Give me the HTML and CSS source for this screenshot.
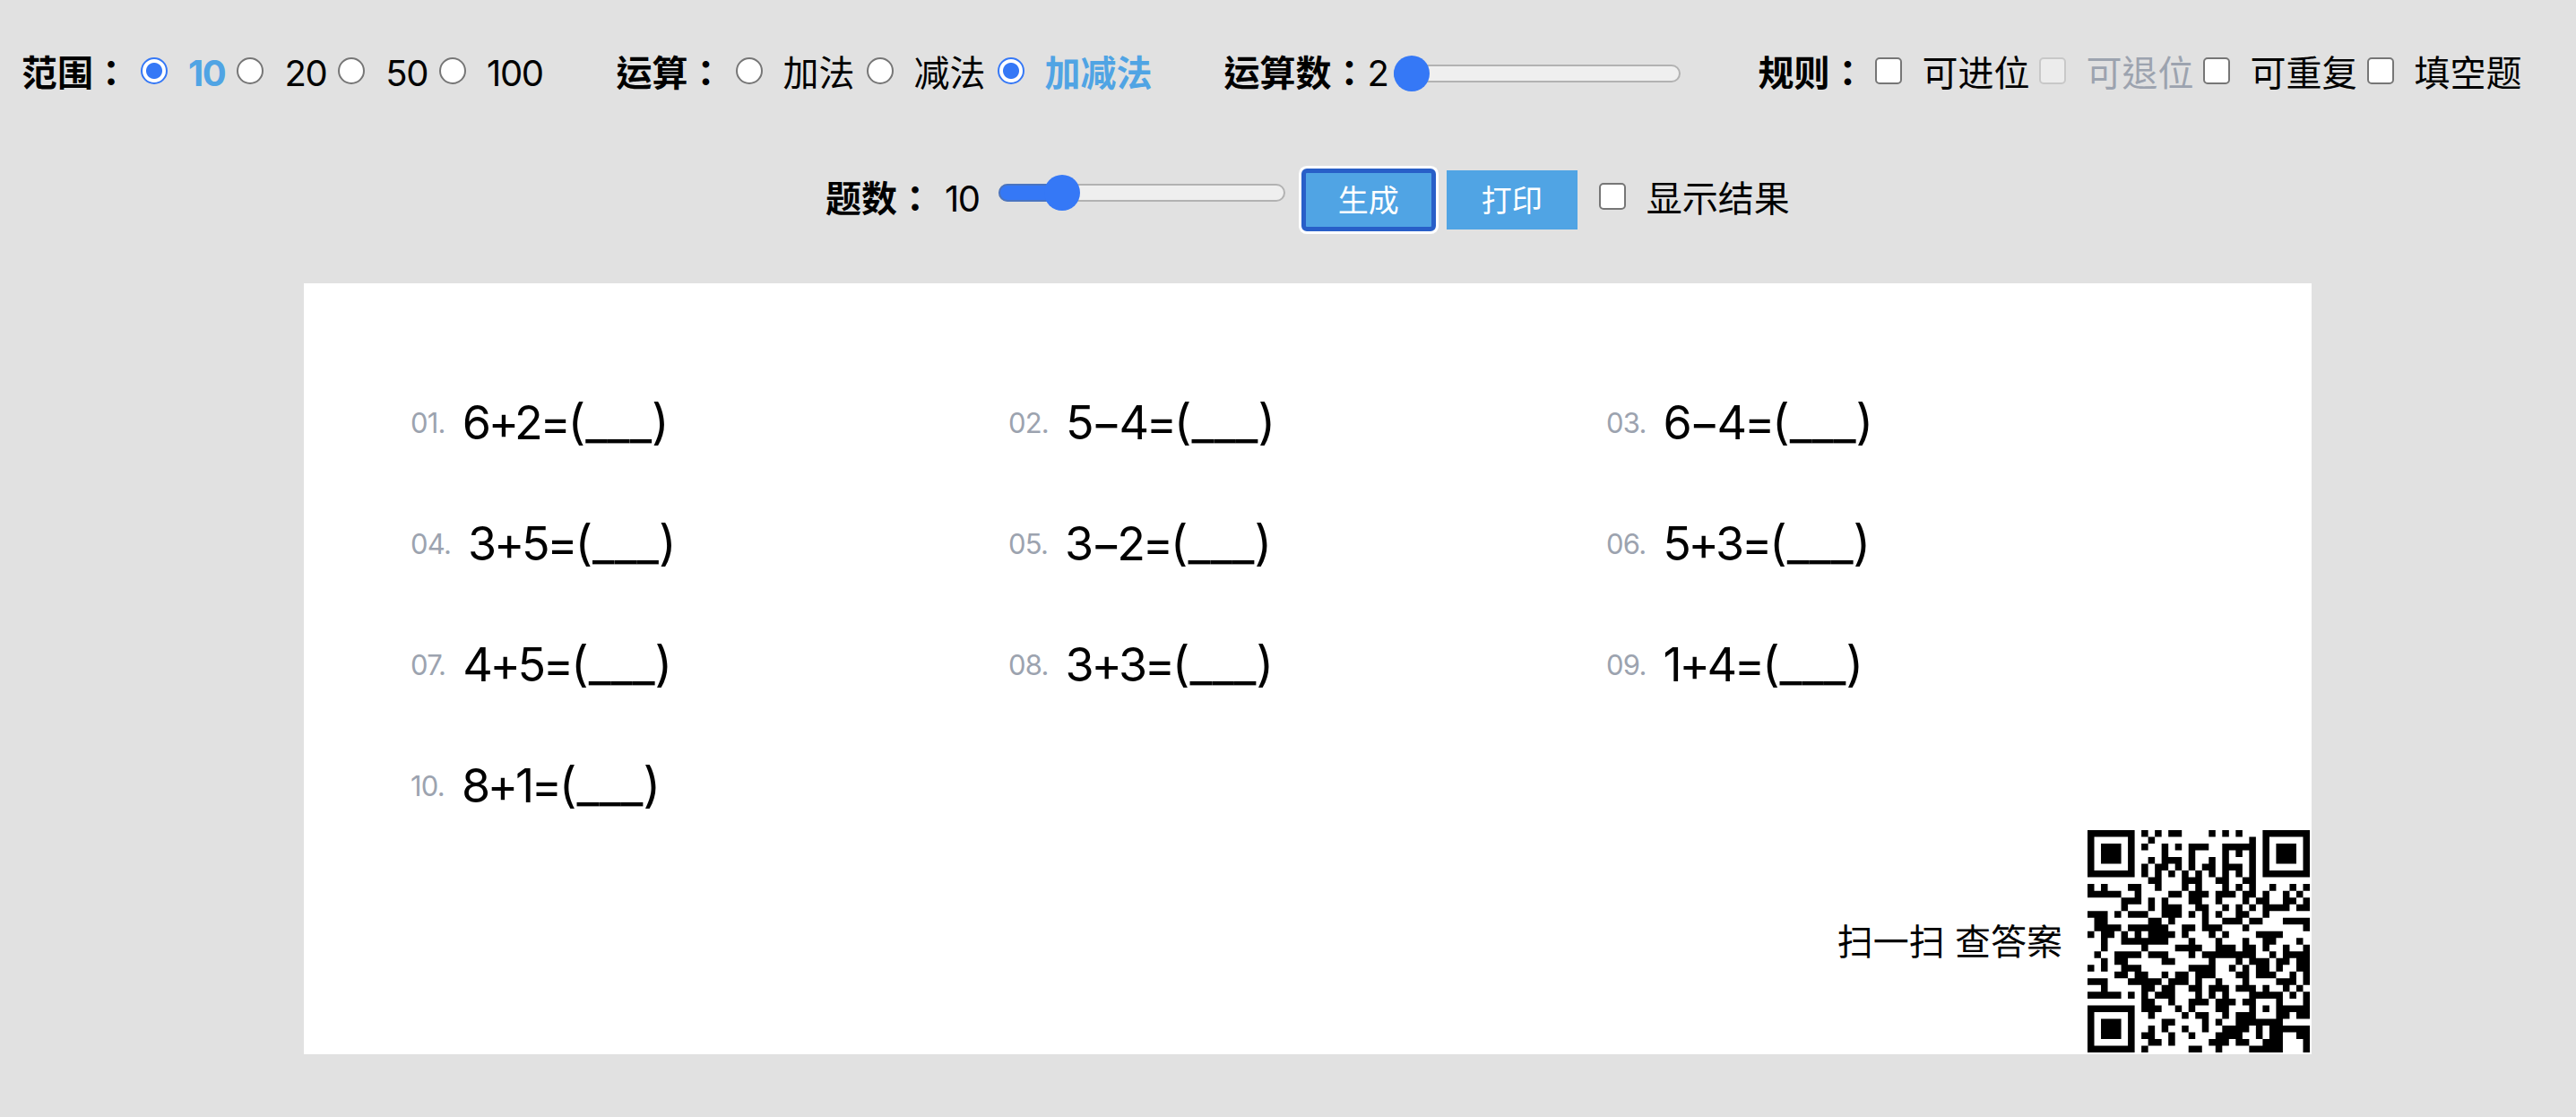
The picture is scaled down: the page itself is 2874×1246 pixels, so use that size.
FILE: index.html
```html
<!DOCTYPE html>
<html lang="zh-TW">
<head>
  <meta charset="UTF-8">
  <title>口算题</title>
  <link rel="stylesheet" href="styles.css">
</head>
<body>
  <div class="row row-options">
    <div class="group">
      <b class="title">范围：</b>
      <label class="opt"><input type="radio" name="range" checked><span class="num">10</span></label>
      <label class="opt"><input type="radio" name="range"><span class="num">20</span></label>
      <label class="opt"><input type="radio" name="range"><span class="num">50</span></label>
      <label class="opt"><input type="radio" name="range"><span class="num">100</span></label>
    </div>
    <div class="group group-op">
      <b class="title">运算：</b>
      <label class="opt"><input type="radio" name="op"><span>加法</span></label>
      <label class="opt"><input type="radio" name="op"><span>减法</span></label>
      <label class="opt"><input type="radio" name="op" checked><span>加减法</span></label>
    </div>
    <div class="group group-count">
      <b class="title">运算数：</b>
      <span class="num">2</span>
      <div class="slider"><div class="fill" style="width: 20px"></div><div class="thumb" style="left: 0"></div></div>
    </div>
    <div class="group group-rule">
      <b class="title">规则：</b>
      <label class="opt"><input type="checkbox"><span>可进位</span></label>
      <label class="opt"><input type="checkbox" disabled><span>可退位</span></label>
      <label class="opt"><input type="checkbox"><span>可重复</span></label>
      <label class="opt"><input type="checkbox"><span>填空题</span></label>
    </div>
  </div>

  <div class="row row-actions">
    <b class="title">题数：</b>
    <span class="num">10</span>
    <div class="slider"><div class="fill" style="width: 71px"></div><div class="thumb" style="left: 51px"></div></div>
    <button class="btn active">生成</button>
    <button class="btn">打印</button>
    <label class="opt show-result"><input type="checkbox"><span>显示结果</span></label>
  </div>

  <div class="paper">
    <div class="questions">
      <div class="question"><span class="no">01.</span><span class="eq">6+2=<span class="blank">(___)</span></span></div>
      <div class="question"><span class="no">02.</span><span class="eq">5−4=<span class="blank">(___)</span></span></div>
      <div class="question"><span class="no">03.</span><span class="eq">6−4=<span class="blank">(___)</span></span></div>
      <div class="question"><span class="no">04.</span><span class="eq">3+5=<span class="blank">(___)</span></span></div>
      <div class="question"><span class="no">05.</span><span class="eq">3−2=<span class="blank">(___)</span></span></div>
      <div class="question"><span class="no">06.</span><span class="eq">5+3=<span class="blank">(___)</span></span></div>
      <div class="question"><span class="no">07.</span><span class="eq">4+5=<span class="blank">(___)</span></span></div>
      <div class="question"><span class="no">08.</span><span class="eq">3+3=<span class="blank">(___)</span></span></div>
      <div class="question"><span class="no">09.</span><span class="eq">1+4=<span class="blank">(___)</span></span></div>
      <div class="question"><span class="no">10.</span><span class="eq">8+1=<span class="blank">(___)</span></span></div>
    </div>
    <div class="answer">
      <span>扫一扫 查答案</span>
      <svg class="qrcode" viewBox="0 0 33 33"><path id="qr"></path></svg>
    </div>
  </div>
  <script src="qr.js"></script>
</body>
</html>
```
FILE: styles.css
```css
* {
  margin: 0;
  padding: 0;
  box-sizing: border-box;
}

body {
  background: #e1e1e1;
  color: #000;
  font-family: Inter, "Noto Sans CJK TC", sans-serif;
  font-size: 40px;
  line-height: 60px;
}

.row {
  display: flex;
  align-items: center;
  white-space: nowrap;
}

.row-options {
  height: 60px;
  margin-top: 52px;
  padding-left: 24px;
}

.row-actions {
  height: 66px;
  margin-top: 78px;
  padding-left: 921px;
}

.group {
  display: flex;
  align-items: center;
}

.group-op {
  margin-left: 82px;
}

.group-count {
  margin-left: 80px;
}

.group-rule {
  margin-left: 87px;
}

.opt {
  display: flex;
  align-items: center;
}

.opt span {
  margin-left: 23px;
}

.num {
  letter-spacing: -1.4px;
}

input {
  appearance: none;
  width: 30px;
  height: 30px;
  margin-left: 13px;
  margin-bottom: 6px;
  background: #fff;
  border: 2px solid #767676;
}

input[type="radio"] {
  border-radius: 50%;
}

input[type="checkbox"] {
  margin-left: 10px;
  border-radius: 5px;
}

input:checked {
  border-color: #3578f6;
  background: radial-gradient(circle, #3578f6 8.5px, #fff 9.5px);
}

input:checked + span {
  color: #50a4e4;
  font-weight: bold;
}

input:disabled {
  background: #ececec;
  border-color: #c8c8c8;
}

input:disabled + span {
  color: #9ca3af;
}

.slider {
  position: relative;
  width: 320px;
  height: 20px;
  background: #efefef;
  border: 2px solid #b2b2b2;
  border-radius: 10px;
}

.slider .fill {
  height: 20px;
  margin: -2px;
  background: #3578f6;
  border: 2px solid #4a74c0;
  border-radius: 10px 0 0 10px;
}

.slider .thumb {
  position: absolute;
  top: -12px;
  width: 40px;
  height: 40px;
  margin-left: -2px;
  background: #3578f6;
  border-radius: 50%;
}

.group-count .slider {
  margin-left: 6px;
}

.row-actions .title,
.row-actions .num,
.show-result {
  margin-bottom: 3px;
}

.row-actions .num {
  margin-left: 13px;
}

.row-actions .slider {
  margin-left: 21px;
  margin-bottom: 16px;
}

.btn {
  width: 146px;
  height: 66px;
  margin-left: 14px;
  padding-bottom: 3px;
  border: none;
  background: #50a4e4;
  color: #fff;
  font-family: inherit;
  font-size: 34px;
}

.btn.active {
  margin-left: 20px;
  border-radius: 4px;
  outline: 5px solid #285fc8;
  outline-offset: -3px;
  box-shadow: 0 0 0 5px #fff;
}

.show-result {
  margin-left: 14px;
}

.paper {
  width: 2240px;
  height: 860px;
  margin: 60px 0 0 339px;
  padding-top: 88px;
  background: #fff;
}

.questions {
  display: grid;
  grid-template-columns: repeat(3, 667px);
  grid-auto-rows: 135px;
  padding-left: 119px;
}

.question {
  display: flex;
  align-items: center;
  height: 135px;
}

.no {
  color: #9ca3af;
  font-size: 31px;
  letter-spacing: -0.8px;
}

.eq {
  margin-left: 19px;
  font-size: 52px;
  letter-spacing: -3.3px;
}

.blank {
  font-size: 54px;
  letter-spacing: 0;
}

.answer {
  display: flex;
  align-items: center;
  justify-content: flex-end;
  margin-top: -18px;
  padding-right: 2px;
}

.answer span {
  padding-top: 2px;
}

.qrcode {
  width: 248px;
  height: 248px;
  margin-left: 28px;
}
```
FILE: qr.js
```javascript
// dark runs of each row, as first-last column
const rows = [
  "0-6 8 10 12-13 18 20 22 26-32",
  "0 6 9 24 26 32",
  "0 2-4 6 8 11 13 15-17 20-24 26 28-30 32",
  "0 2-4 6 11 15 20 22 24 26 28-30 32",
  "0 2-4 6 9 11-13 15 18 20 24 26 28-30 32",
  "0 6 8 10-11 13 15 17-18 20-22 24 26 32",
  "0-6 8 10 12 14 16 18 20 22 24 26-32",
  "9-10 14-16 19-20 23-24",
  "0 2 6-7 10 14 16 20 22 24 27 30 32",
  "0-4 7 12-13 15-17 19-21 23-24 26 29 31",
  "5-7 9 11 15-16 19 23 25-26 29-30 32",
  "5 9 11-13 16-17 20 22 24 26-29 31-32",
  "0-2 4 6-8 11-13 15 17 19 22-23 26",
  "1-2 9-10 12 17 20-22 24-25 29-32",
  "1-4 6-11 14-15 17-19 23 32",
  "0 2-3 5 7 9-12 14 18 20 25-28",
  "2 5-11 15 19 23 26-27 31",
  "2 8 13-16 19-21 23-24 26 29 32",
  "1 4-7 9-11 15 17-24 27 29-32",
  "2 4-5 11-12 18 22 24-26 28-29 31-32",
  "0 2 5-7 15-18 21 23 25-26 28 31-32",
  "4-5 7-8 11 13-14 16-18 22-23 25-27 30 32",
  "0-2 6-10 12-14 16 19 23 28-30 32",
  "2 8-9 11-12 15-16 18-20 22-24 26 29 31",
  "0-4 6 8 10-12 16 18 20 24-28 30 32",
  "8-9 12 15-17 19-21 23-24 28 32",
  "0-6 8-10 13 15 19-20 24 26 28-32",
  "0 6 9 14 16-17 20 22-24 28-29 31-32",
  "0 2-4 6 11-12 17 19 22-28",
  "0 2-4 6 9 11 14 17 20-23 25 27-32",
  "0 2-4 6 8-9 12 15 19-22 25 27-28 31-32",
  "0 6 9-10 12 18-20 22-23 26-28 32",
  "0-6 8 15-16 19 24-28 32"
];

let d = "";
rows.forEach((row, y) => {
  row.split(" ").forEach((run) => {
    const [from, to = from] = run.split("-").map(Number);
    d += `M${from} ${y}H${to + 1}V${y + 1}H${from}Z`;
  });
});
document.getElementById("qr").setAttribute("d", d);
```
